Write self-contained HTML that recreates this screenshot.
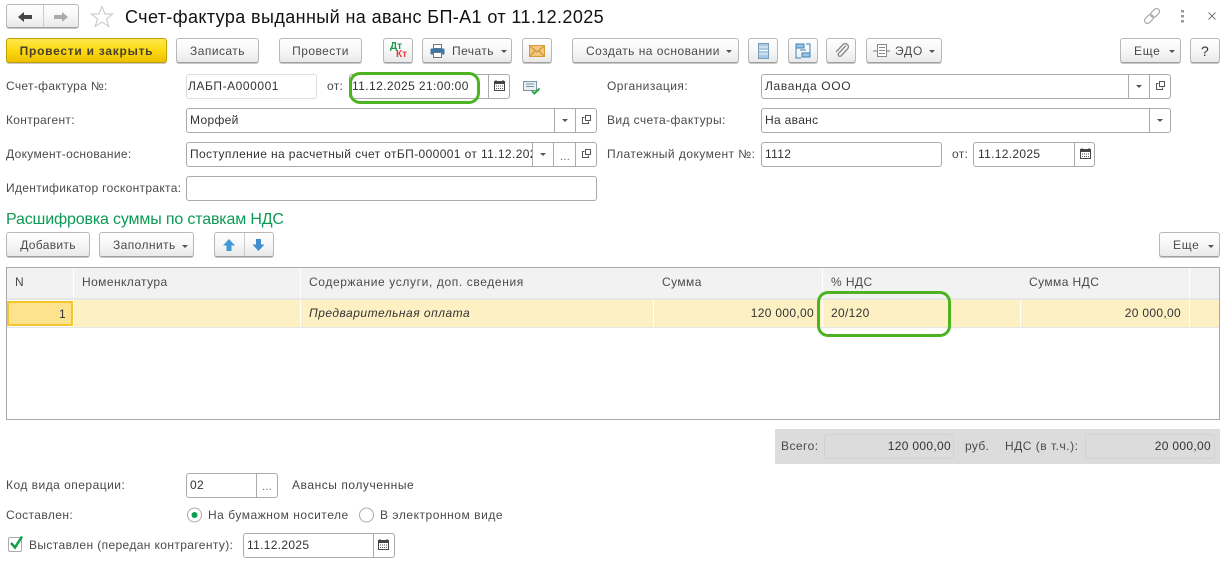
<!DOCTYPE html>
<html lang="ru"><head><meta charset="utf-8"><title>Счет-фактура</title>
<style>
html,body{margin:0;padding:0;background:#fff;}
body{width:1226px;height:561px;position:relative;overflow:hidden;font-family:"Liberation Sans",sans-serif;font-size:12px;color:#4a4a4a;letter-spacing:.32px;}
div{position:absolute;box-sizing:border-box;white-space:nowrap;}
svg{position:absolute;overflow:visible;}
.b{background:linear-gradient(#fff,#f7f7f7 50%,#e9e9e9);border:1px solid #b8b8b8;border-bottom-color:#a0a0a0;border-radius:3px;box-shadow:0 1px 0 #c8c8c8;height:25px;top:38px;line-height:25px;text-align:center;color:#4a4a4a;}
.f{background:#fff;border:1px solid #aaa;border-radius:3px;height:25px;line-height:23px;padding-left:3px;color:#333;overflow:hidden;}
.l{height:25px;line-height:25px;}
.s{width:1px;background:#aaa;}
.t{width:0;height:0;border-left:3px solid transparent;border-right:3px solid transparent;border-top:3px solid #555;}
.d{color:#666;font-size:11px;line-height:14px;}
.h{top:268px;height:30px;line-height:29px;background:#f2f2f2;padding-left:8px;letter-spacing:.42px;}
.c{top:300px;height:27px;line-height:26px;background:#fdf0c3;padding:0 8px;color:#333;}
</style></head><body>

<!-- nav -->
<div class="b" style="left:6px;top:4px;width:73px;height:24px"></div>
<div class="s" style="left:43px;top:5px;height:22px;background:#ccc"></div>
<svg style="left:0;top:0" width="120" height="30"><path d="M18 17l6-5v3h8v4h-8v3z" fill="#444"/><path d="M68 17l-6-5v3h-8v4h8v3z" fill="#aaa"/><path d="M102 6.500l3 7.500h7.500l-6 5 2.300 7.500-6.800-4.500-6.800 4.500 2.300-7.500-6-5h7.500z" fill="#fff" stroke="#c4c4c4"/></svg>
<div style="left:125px;top:6px;font-size:18px;line-height:22px;color:#111;letter-spacing:.39px">Счет-фактура выданный на аванс БП-А1 от 11.12.2025</div>
<svg style="left:1140px;top:5px" width="80" height="24"><rect x="4" y="11" width="10" height="6" rx="3" transform="rotate(-45 9 14)" fill="none" stroke="#999"/><rect x="10" y="5" width="10" height="6" rx="3" transform="rotate(-45 15 8)" fill="none" stroke="#999"/><g fill="#999"><rect x="41" y="5" width="3" height="2.500"/><rect x="41" y="10" width="3" height="2.500"/><rect x="41" y="15" width="3" height="2.500"/></g><path d="M68.500 7.500l7 7M75.500 7.500l-7 7" stroke="#777" stroke-width="1"/></svg>

<!-- toolbar -->
<div class="b" style="left:6px;width:161px;background:linear-gradient(#ffe84d,#fbd80c 55%,#e9bf00);border-color:#c49f00;color:#4a4030;font-weight:bold;letter-spacing:.74px">Провести и закрыть</div>
<div class="b" style="left:176px;width:83px;letter-spacing:.45px">Записать</div>
<div class="b" style="left:279px;width:83px;letter-spacing:.45px">Провести</div>
<div class="b" style="left:383px;width:30px"></div>
<div style="left:390px;top:42px;font-size:10px;font-weight:bold;color:#1a9a4a;line-height:10px;letter-spacing:0">Дт</div>
<div style="left:396px;top:49px;font-size:10px;font-weight:bold;color:#e04040;line-height:12px;letter-spacing:0">Кт</div>
<div class="b" style="left:422px;width:90px;text-align:left;padding-left:29px;letter-spacing:.45px">Печать</div>
<svg style="left:430px;top:44px" width="15" height="14"><rect x="3.500" y="0.500" width="8" height="4" fill="#fff" stroke="#777"/><rect x="0.500" y="4.500" width="14" height="6" rx="1" fill="#3b78a8"/><rect x="3.500" y="8.500" width="8" height="5" fill="#fff" stroke="#777"/></svg>
<div class="t" style="left:501px;top:50px"></div>
<div class="b" style="left:522px;width:30px"></div>
<svg style="left:529px;top:45px" width="16" height="12"><rect x="0.500" y="0.500" width="15" height="11" fill="#f3c77a" stroke="#d89a3a"/><path d="M1 1l7 6 7-6M1 11l5-5M15 11l-5-5" fill="none" stroke="#c98d35"/></svg>
<div class="b" style="left:572px;width:167px;text-align:left;padding-left:13px;letter-spacing:.47px">Создать на основании</div>
<div class="t" style="left:726px;top:50px"></div>
<div class="b" style="left:748px;width:30px"></div>
<svg style="left:758px;top:43px" width="11" height="16"><rect x="0.500" y="0.500" width="10" height="15" fill="#a9c9e2" stroke="#7d9db5"/><path d="M1 4h9M1 7.500h9M1 11h9" stroke="#f0f6fa"/></svg>
<div class="b" style="left:788px;width:30px"></div>
<svg style="left:795px;top:43px" width="16" height="16"><rect x="1" y="1" width="8" height="4" fill="#9cc3e0" stroke="#3e82b5"/><rect x="7" y="10" width="8" height="4" fill="#9cc3e0" stroke="#3e82b5"/><path d="M1 5v10h5M15 10V1h-4M5 7h6" fill="none" stroke="#3e82b5"/></svg>
<div class="b" style="left:826px;width:30px"></div>
<svg style="left:834px;top:43px" width="15" height="16"><path d="M12 3.500l-7.500 8a1.800 1.800 0 0 0 2.500 2.500l6.500-7a3 3 0 0 0-4.500-4.500l-7 7.500" fill="none" stroke="#888" stroke-width="1.300" transform="translate(0,-1)"/></svg>
<div class="b" style="left:866px;width:76px;text-align:left;padding-left:28px;letter-spacing:.8px">ЭДО</div>
<svg style="left:872px;top:43px" width="18" height="16"><rect x="5.500" y="1.500" width="9" height="12" fill="#fff" stroke="#888"/><path d="M7 4.500h6M7 7.500h6M7 10.500h6" stroke="#888"/><path d="M1 8h4M15 8h3" stroke="#777"/></svg>
<div class="t" style="left:929px;top:50px"></div>
<div class="b" style="left:1120px;width:61px;text-align:left;padding-left:13px;letter-spacing:.7px">Еще</div>
<div class="t" style="left:1169px;top:50px"></div>
<div class="b" style="left:1190px;width:30px;font-size:14px;color:#333">?</div>

<!-- row 1 -->
<div class="l" style="left:6px;top:74px">Счет-фактура №:</div>
<div class="f" style="left:186px;top:74px;width:131px;border-color:#ddd;padding-left:1px;letter-spacing:.55px">ЛАБП-А000001</div>
<div class="l" style="left:327px;top:74px">от:</div>
<div class="f" style="left:349px;top:74px;width:161px;padding-left:2px;letter-spacing:.4px">11.12.2025 21:00:00</div>
<div class="s" style="left:488px;top:75px;height:23px"></div>
<svg style="left:493px;top:79px" width="13" height="14"><rect x="1.500" y="2.500" width="10" height="9" fill="#fff" stroke="#444"/><rect x="1" y="2" width="11" height="3" fill="#444"/><path d="M3 1v2M10 1v2" stroke="#444"/><path d="M3 7h7M3 9.500h7" stroke="#555" stroke-dasharray="1 1"/></svg>
<svg style="left:523px;top:81px" width="18" height="14"><rect x="0.500" y="0.500" width="13" height="9" fill="#e8eff4" stroke="#7d95a6"/><path d="M3 3h8M3 5.500h8" stroke="#7d95a6"/><path d="M9 10l2.500 2.500 5-5" fill="none" stroke="#2aa84a" stroke-width="2"/></svg>
<div class="l" style="left:607px;top:74px;letter-spacing:.45px">Организация:</div>
<div class="f" style="left:761px;top:74px;width:410px;letter-spacing:.65px">Лаванда ООО</div>
<div class="s" style="left:1128px;top:75px;height:23px"></div><div class="t" style="left:1136px;top:85px"></div>
<div class="s" style="left:1149px;top:75px;height:23px"></div>
<svg style="left:1155px;top:80px" width="12" height="12"><path d="M3.500 3.500H1.500v6h6V7.500" fill="none" stroke="#555"/><rect x="4.500" y="1.500" width="5" height="5" fill="none" stroke="#555"/></svg>

<!-- row 2 -->
<div class="l" style="left:6px;top:108px">Контрагент:</div>
<div class="f" style="left:186px;top:108px;width:411px">Морфей</div>
<div class="s" style="left:554px;top:109px;height:23px"></div><div class="t" style="left:562px;top:119px"></div>
<div class="s" style="left:575px;top:109px;height:23px"></div>
<svg style="left:581px;top:114px" width="12" height="12"><path d="M3.500 3.500H1.500v6h6V7.500" fill="none" stroke="#555"/><rect x="4.500" y="1.500" width="5" height="5" fill="none" stroke="#555"/></svg>
<div class="l" style="left:607px;top:108px;letter-spacing:.4px">Вид счета-фактуры:</div>
<div class="f" style="left:761px;top:108px;width:410px">На аванс</div>
<div class="s" style="left:1149px;top:109px;height:23px"></div><div class="t" style="left:1157px;top:119px"></div>

<!-- row 3 -->
<div class="l" style="left:6px;top:142px">Документ-основание:</div>
<div class="f" style="left:186px;top:142px;width:411px;letter-spacing:.38px"><span style="display:block;width:342px;overflow:hidden">Поступление на расчетный счет отБП-000001 от 11.12.2025</span></div>
<div class="s" style="left:532px;top:143px;height:23px"></div><div class="t" style="left:540px;top:153px"></div>
<div class="s" style="left:553px;top:143px;height:23px"></div><div class="d" style="left:560px;top:150px">...</div>
<div class="s" style="left:575px;top:143px;height:23px"></div>
<svg style="left:581px;top:148px" width="12" height="12"><path d="M3.500 3.500H1.500v6h6V7.500" fill="none" stroke="#555"/><rect x="4.500" y="1.500" width="5" height="5" fill="none" stroke="#555"/></svg>
<div class="l" style="left:607px;top:142px;letter-spacing:.46px">Платежный документ №:</div>
<div class="f" style="left:761px;top:142px;width:181px">1112</div>
<div class="l" style="left:952px;top:142px">от:</div>
<div class="f" style="left:973px;top:142px;width:122px;padding-left:4px">11.12.2025</div>
<div class="s" style="left:1074px;top:143px;height:23px"></div>
<svg style="left:1079px;top:147px" width="13" height="14"><rect x="1.500" y="2.500" width="10" height="9" fill="#fff" stroke="#444"/><rect x="1" y="2" width="11" height="3" fill="#444"/><path d="M3 1v2M10 1v2" stroke="#444"/><path d="M3 7h7M3 9.500h7" stroke="#555" stroke-dasharray="1 1"/></svg>

<!-- row 4 -->
<div class="l" style="left:6px;top:176px">Идентификатор госконтракта:</div>
<div class="f" style="left:186px;top:176px;width:411px"></div>

<div style="left:6px;top:210px;font-size:16px;line-height:20px;color:#0c9a55;letter-spacing:-.16px">Расшифровка суммы по ставкам НДС</div>

<!-- table toolbar -->
<div class="b" style="left:6px;top:232px;width:84px">Добавить</div>
<div class="b" style="left:99px;top:232px;width:95px;text-align:left;padding-left:13px;letter-spacing:.42px">Заполнить</div>
<div class="t" style="left:182px;top:245px"></div>
<div class="b" style="left:214px;top:232px;width:60px"></div>
<div class="s" style="left:244px;top:233px;height:23px;background:#ccc"></div>
<svg style="left:222px;top:238px" width="46" height="14"><path d="M7 1l6 6.500H9.500V13h-5V7.500H1z" fill="#3f9bd8"/><path d="M36.500 13l6-6.500H39V1h-5v5.500h-3.500z" fill="#3f8fd0"/></svg>
<div class="b" style="left:1159px;top:232px;width:61px;text-align:left;padding-left:13px;letter-spacing:.7px">Еще</div>
<div class="t" style="left:1208px;top:245px"></div>

<!-- table -->
<div style="left:6px;top:267px;width:1214px;height:153px;border:1px solid #a8a8a8"></div>
<div style="left:7px;top:298px;width:1212px;height:2px;background:#e6e6e6"></div>
<div class="h" style="left:7px;width:66px">N</div>
<div class="h" style="left:74px;width:226px">Номенклатура</div>
<div class="h" style="left:301px;width:353px;letter-spacing:.62px">Содержание услуги, доп. сведения</div>
<div class="h" style="left:654px;width:168px">Сумма</div>
<div class="h" style="left:823px;width:198px">% НДС</div>
<div class="h" style="left:1021px;width:168px">Сумма НДС</div>
<div class="h" style="left:1190px;width:29px"></div>
<div class="c" style="left:7px;width:66px;top:301px;height:25px;background:#fde38e;border:2px solid #f6c42c;text-align:right;padding-right:5px;line-height:23px">1</div>
<div class="c" style="left:74px;width:226px"></div>
<div class="c" style="left:301px;width:352px;font-style:italic;letter-spacing:.5px">Предварительная оплата</div>
<div class="c" style="left:654px;width:168px;text-align:right">120 000,00</div>
<div class="c" style="left:823px;width:197px">20/120</div>
<div class="c" style="left:1021px;width:168px;text-align:right">20 000,00</div>
<div class="c" style="left:1190px;width:29px"></div>
<div style="left:7px;top:327px;width:1212px;height:1px;background:#e6e6e6"></div>

<!-- totals -->
<div style="left:775px;top:429px;width:445px;height:35px;background:#dcdcdc"></div>
<div class="l" style="left:781px;top:434px;letter-spacing:.45px">Всего:</div>
<div class="f" style="left:824px;top:434px;width:130px;background:#dcdcdc;border-color:#d2d2d2;text-align:right;padding-right:2px">120 000,00</div>
<div class="l" style="left:965px;top:434px">руб.</div>
<div class="l" style="left:1005px;top:434px;letter-spacing:.5px">НДС (в т.ч.):</div>
<div class="f" style="left:1085px;top:434px;width:130px;background:#dcdcdc;border-color:#d2d2d2;text-align:right;padding-right:3px">20 000,00</div>

<!-- bottom -->
<div class="l" style="left:6px;top:473px;letter-spacing:.48px">Код вида операции:</div>
<div class="f" style="left:186px;top:473px;width:92px">02</div>
<div class="s" style="left:256px;top:474px;height:23px"></div><div class="d" style="left:262px;top:480px">...</div>
<div class="l" style="left:292px;top:473px;color:#444;letter-spacing:.55px">Авансы полученные</div>
<div class="l" style="left:6px;top:503px;letter-spacing:.4px">Составлен:</div>
<svg style="left:186px;top:507px" width="190" height="16"><circle cx="8.500" cy="8" r="7" fill="#fff" stroke="#aaa"/><circle cx="8.500" cy="8" r="3" fill="#0c9a55"/><circle cx="180.500" cy="8" r="7" fill="#fff" stroke="#aaa"/></svg>
<div class="l" style="left:208px;top:503px;letter-spacing:.52px">На бумажном носителе</div>
<div class="l" style="left:380px;top:503px;letter-spacing:.54px">В электронном виде</div>
<div style="left:8px;top:537px;width:14px;height:15px;background:#fff;border:1px solid #aaa;border-radius:2px"></div>
<svg style="left:8px;top:535px" width="16" height="16"><path d="M3 8l4 4.500 7-11" fill="none" stroke="#11a049" stroke-width="2.500"/></svg>
<div class="l" style="left:29px;top:533px;letter-spacing:.38px">Выставлен (передан контрагенту):</div>
<div class="f" style="left:243px;top:533px;width:152px">11.12.2025</div>
<div class="s" style="left:373px;top:534px;height:23px"></div>
<svg style="left:377px;top:538px" width="13" height="14"><rect x="1.500" y="2.500" width="10" height="9" fill="#fff" stroke="#444"/><rect x="1" y="2" width="11" height="3" fill="#444"/><path d="M3 1v2M10 1v2" stroke="#444"/><path d="M3 7h7M3 9.500h7" stroke="#555" stroke-dasharray="1 1"/></svg>

<!-- highlights -->
<div style="left:349px;top:72px;width:131px;height:32px;border:3px solid #4db320;border-radius:11px"></div>
<div style="left:817px;top:291px;width:134px;height:46px;border:3px solid #4db320;border-radius:11px"></div>
</body></html>
